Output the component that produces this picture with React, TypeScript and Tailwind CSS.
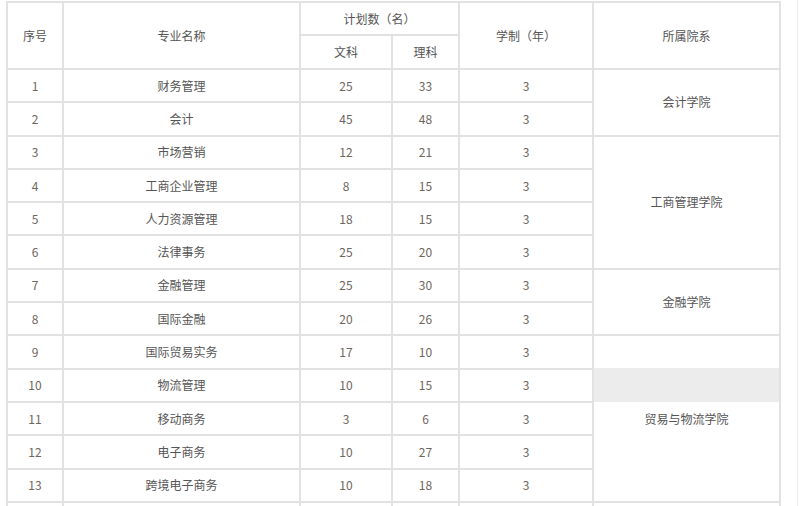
import React from 'react'

type Row = {
  no: number
  name: string
  arts: number
  sci: number
  years: number
}

const rows: Row[] = [
  { no: 1, name: '财务管理', arts: 25, sci: 33, years: 3 },
  { no: 2, name: '会计', arts: 45, sci: 48, years: 3 },
  { no: 3, name: '市场营销', arts: 12, sci: 21, years: 3 },
  { no: 4, name: '工商企业管理', arts: 8, sci: 15, years: 3 },
  { no: 5, name: '人力资源管理', arts: 18, sci: 15, years: 3 },
  { no: 6, name: '法律事务', arts: 25, sci: 20, years: 3 },
  { no: 7, name: '金融管理', arts: 25, sci: 30, years: 3 },
  { no: 8, name: '国际金融', arts: 20, sci: 26, years: 3 },
  { no: 9, name: '国际贸易实务', arts: 17, sci: 10, years: 3 },
  { no: 10, name: '物流管理', arts: 10, sci: 15, years: 3 },
  { no: 11, name: '移动商务', arts: 3, sci: 6, years: 3 },
  { no: 12, name: '电子商务', arts: 10, sci: 27, years: 3 },
  { no: 13, name: '跨境电子商务', arts: 10, sci: 18, years: 3 },
]

// college cell starts at these row numbers, with its rowspan
const colleges: Record<number, { name: string; span: number; band?: boolean }> = {
  1: { name: '会计学院', span: 2 },
  3: { name: '工商管理学院', span: 4 },
  7: { name: '金融学院', span: 2 },
  9: { name: '贸易与物流学院', span: 5, band: true },
}

const cell = 'border-2 border-[#e2e2e2] text-center align-middle p-0'
const num = 'text-[#6e655c]'

const App = () => {
  return (
    <div
      className="w-[798px] h-[506px] bg-white border-r border-[#ececec] overflow-hidden"
      style={{ fontFamily: '"Noto Sans CJK SC", "Noto Sans", sans-serif' }}
    >
      <table className="ml-[6px] mt-[1px] w-[773px] table-fixed border-collapse text-[12px] text-[#555]">
        <colgroup>
          <col className="w-[56px]" />
          <col className="w-[237px]" />
          <col className="w-[92px]" />
          <col className="w-[67px]" />
          <col className="w-[134px]" />
          <col className="w-[187px]" />
        </colgroup>
        <thead>
          <tr className="h-[33px]">
            <th rowSpan={2} className={`${cell} font-normal`}>序号</th>
            <th rowSpan={2} className={`${cell} font-normal`}>专业名称</th>
            <th colSpan={2} className={`${cell} font-normal`}>计划数（名）</th>
            <th rowSpan={2} className={`${cell} font-normal`}>学制（年）</th>
            <th rowSpan={2} className={`${cell} font-normal`}>所属院系</th>
          </tr>
          <tr className="h-[34px]">
            <th className={`${cell} font-normal`}>文科</th>
            <th className={`${cell} font-normal`}>理科</th>
          </tr>
        </thead>
        <tbody>
          {rows.map((r) => {
            const c = colleges[r.no]
            return (
              <tr key={r.no} className="h-[33.3px]">
                <td className={`${cell} ${num}`}>{r.no}</td>
                <td className={cell}>{r.name}</td>
                <td className={`${cell} ${num}`}>{r.arts}</td>
                <td className={`${cell} ${num}`}>{r.sci}</td>
                <td className={`${cell} ${num}`}>{r.years}</td>
                {c && (
                  <td
                    rowSpan={c.span}
                    className={`${cell} ${
                      c.band
                        ? 'bg-[linear-gradient(to_bottom,#ffffff_32px,#ececec_32px,#ececec_66px,#ffffff_66px)]'
                        : ''
                    }`}
                  >
                    {c.name}
                  </td>
                )}
              </tr>
            )
          })}
          {/* next row, cut off by the bottom of the view */}
          <tr className="h-[33.3px]">
            <td className={cell}></td>
            <td className={cell}></td>
            <td className={cell}></td>
            <td className={cell}></td>
            <td className={cell}></td>
            <td className={cell}></td>
          </tr>
        </tbody>
      </table>
    </div>
  )
}

export default App
